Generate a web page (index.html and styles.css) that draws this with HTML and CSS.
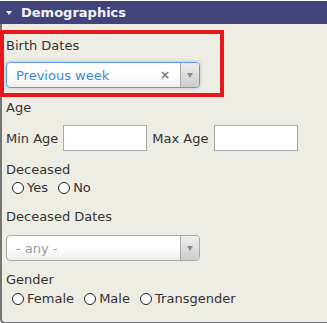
FILE: index.html
```html
<!DOCTYPE html>
<html lang="en">
<head>
    <meta charset="UTF-8">
    <meta name="viewport" content="width=device-width, initial-scale=1.0">
    <title>Demographics</title>
    <link rel="stylesheet" href="styles.css">
</head>
<body>
    <div class="panel">
        <div class="panel-header">
            <span class="caret"></span>
            <span>Demographics</span>
        </div>
        <div class="panel-body">
            <div class="field field-select highlight">
                <div class="field-label">Birth Dates</div>
                <div class="select focused">
                    <span class="select-value">Previous week</span>
                    <span class="select-clear">&times;</span>
                    <span class="select-arrow"><b></b></span>
                </div>
            </div>
            <div class="field age-field">
                <div class="field-label">Age</div>
                <div class="age-row">
                    <span>Min Age</span>
                    <input type="text" class="age-input">
                    <span>Max Age</span>
                    <input type="text" class="age-input">
                </div>
            </div>
            <div class="field field-radio">
                <div class="field-label">Deceased</div>
                <div class="radio-row">
                    <label class="radio"><input type="radio" name="deceased">Yes</label>
                    <label class="radio"><input type="radio" name="deceased">No</label>
                </div>
            </div>
            <div class="field field-select">
                <div class="field-label">Deceased Dates</div>
                <div class="select">
                    <span class="select-value placeholder">- any -</span>
                    <span class="select-arrow"><b></b></span>
                </div>
            </div>
            <div class="field field-radio gender">
                <div class="field-label">Gender</div>
                <div class="radio-row">
                    <label class="radio"><input type="radio" name="gender">Female</label>
                    <label class="radio"><input type="radio" name="gender">Male</label>
                    <label class="radio"><input type="radio" name="gender">Transgender</label>
                </div>
            </div>
        </div>
    </div>
</body>
</html>
```

FILE: styles.css
```css
html, body {
    overflow: hidden;
}

body {
    margin: 0;
    background-color: #fff;
    font-family: 'DejaVu Sans', Verdana, sans-serif;
    font-size: 13px;
    color: #333;
}

.panel {
    margin-top: 1px;
}

.panel-header {
    height: 23px;
    line-height: 23px;
    background-color: #40447a;
    color: #f2f2fa;
    font-weight: bold;
    padding-left: 6px;
    display: flex;
    align-items: center;
}

.caret {
    width: 0;
    height: 0;
    border-left: 3px solid transparent;
    border-right: 3px solid transparent;
    border-top: 4px solid #f2f2fa;
    margin-right: 9px;
}

.panel-body {
    background-color: #eeede4;
    border-left: 2px solid #757575;
    border-bottom: 2px solid #757575;
    border-bottom-left-radius: 5px;
    padding: 10px 0 13px 4px;
}

.field-label {
    line-height: 16px;
}

.field + .field {
    margin-top: 11px;
}

.field.highlight {
    width: 216px;
    box-sizing: border-box;
    margin-left: -2px;
    padding: 4px 0 5px 2px;
    outline: 4px solid #e8161d;
}

.field.highlight + .field {
    margin-top: 7px;
}

.field-select .select {
    margin-top: 8px;
}

.field-select:not(.highlight) .select {
    margin-top: 10px;
}

.select {
    width: 194px;
    height: 26px;
    box-sizing: border-box;
    border: 1px solid #aaa;
    border-radius: 4px;
    background: linear-gradient(to bottom, #fff 0%, #fff 50%, #eee 100%);
    display: flex;
    align-items: center;
    position: relative;
}

.select.focused {
    border-color: #5897fb;
    box-shadow: 0 0 4px rgba(0, 0, 0, 0.2);
}

.select-value {
    flex: 1;
    padding-left: 9px;
    color: #3a89d6;
}

.select-value.placeholder {
    color: #999;
}

.select-clear {
    color: #777;
    font-weight: bold;
    font-size: 12px;
    margin-right: 10px;
}

.select-arrow {
    width: 18px;
    height: 100%;
    border-left: 1px solid #aaa;
    background: linear-gradient(to bottom, #eee 0%, #ccc 100%);
    border-radius: 0 4px 4px 0;
    display: flex;
    align-items: center;
    justify-content: center;
}

.select-arrow b {
    width: 0;
    height: 0;
    border-left: 3px solid transparent;
    border-right: 3px solid transparent;
    border-top: 5px solid #888;
    margin-top: 1px;
}

.age-row {
    margin-top: 9px;
    display: flex;
    align-items: center;
    gap: 5px;
}

.age-input {
    width: 84px;
    height: 26px;
    box-sizing: border-box;
    border: 1px solid #a9a9a9;
    background-color: #fff;
    margin: 0;
    padding: 2px 4px;
}

.radio-row {
    margin-top: 2px;
    line-height: 16px;
}

.gender .radio-row {
    margin-top: 3px;
}

.radio {
    display: inline-flex;
    align-items: center;
}

.radio input {
    appearance: none;
    -webkit-appearance: none;
    width: 12px;
    height: 12px;
    border: 1px solid #222;
    border-radius: 50%;
    background-color: #fff;
    margin: 0 3px 0 6px;
    box-sizing: border-box;
}
```
